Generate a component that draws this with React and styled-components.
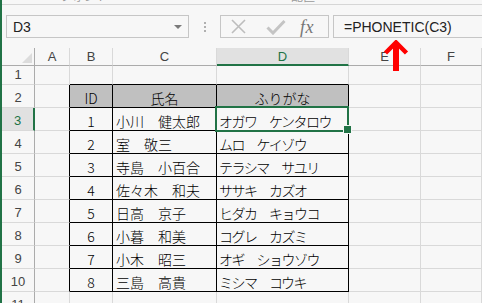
import React from 'react';
import styled, { createGlobalStyle } from 'styled-components';

const GREEN = '#217346';
const GRID = '#d9d9d9';
const BG = '#f7f7f7';

const GlobalStyle = createGlobalStyle`
  html, body { margin: 0; padding: 0; background: ${BG}; overflow: hidden; }
  * { box-sizing: border-box; }
`;

const Page = styled.div`
  position: relative;
  width: 482px;
  height: 303px;
  overflow: hidden;
  border-left: 2px solid ${GREEN};
  background: ${BG};
  font-family: "Liberation Sans", Arial, sans-serif;
`;

const TopStrip = styled.div`
  height: 5px;
  border-bottom: 1px solid #d6d6d6;
  overflow: hidden;
  display: flex;
  font: 12px/12px "Noto Sans CJK JP", sans-serif;
  color: #9a9a9a;
`;

const StripLabel = styled.span`
  margin-top: -10px;
  margin-left: ${p => p.$gap}px;
`;

const FormulaBar = styled.div`
  display: flex;
  align-items: center;
  height: 23px;
  margin: 10px 0 10px 4px;
`;

const NameBox = styled.div`
  width: 183px;
  height: 23px;
  border: 1px solid #c6c6c6;
  display: flex;
  align-items: center;
  justify-content: space-between;
  padding: 0 6px 0 6px;
  font-size: 14px;
  color: #222;
`;

const DropArrow = styled.span`
  width: 0;
  height: 0;
  border-left: 4px solid transparent;
  border-right: 4px solid transparent;
  border-top: 4px solid #7a7a7a;
`;

const Dots = styled.div`
  display: flex;
  flex-direction: column;
  gap: 2px;
  margin-left: 15px;
`;

const Dot = styled.span`
  width: 2px;
  height: 2px;
  background: #b0b0b0;
`;

const ButtonGroup = styled.div`
  width: 109px;
  height: 23px;
  margin-left: 14px;
  border: 1px solid #c6c6c6;
  display: flex;
  align-items: center;
  padding-left: 9px;
`;

const IconSlot = styled.span`
  display: flex;
  margin-right: ${p => p.$gap}px;
`;

const Fx = styled.i`
  font: italic 18px/18px "Liberation Serif", "Times New Roman", serif;
  color: #757575;
  letter-spacing: 0.5px;
`;

const FormulaInput = styled.div`
  flex: 1;
  height: 23px;
  margin-left: 4px;
  margin-right: -10px;
  border: 1px solid #c6c6c6;
  display: flex;
  align-items: center;
  padding-left: 10px;
  font-size: 14px;
  color: #222;
`;

const Sheet = styled.div`
  display: grid;
  grid-template-columns: 33px 35px 43px 104px 132px 72px 1fr;
  grid-template-rows: 18px 19px repeat(10, 23px);
`;

const CornerCell = styled.div`
  position: relative;
  border-right: 1px solid #ababab;
  border-bottom: 1px solid #ababab;
  &::after {
    content: '';
    position: absolute;
    right: 2px;
    bottom: 2px;
    width: 0;
    height: 0;
    border-left: 10px solid transparent;
    border-bottom: 10px solid #dcdcdc;
  }
`;

const ColHeader = styled.div`
  display: flex;
  align-items: center;
  justify-content: center;
  border-right: 1px solid ${GRID};
  border-bottom: ${p => (p.$active ? `2px solid ${GREEN}` : '1px solid #ababab')};
  background: ${p => (p.$active ? '#e1e1e1' : 'transparent')};
  color: ${p => (p.$active ? GREEN : '#444')};
  font-size: 13px;
  padding-top: ${p => (p.$active ? '1px' : '0')};
`;

const RowHeader = styled.div`
  display: flex;
  align-items: flex-end;
  justify-content: center;
  padding-bottom: 2px;
  border-right: ${p => (p.$active ? `2px solid ${GREEN}` : '1px solid #ababab')};
  border-bottom: 1px solid ${GRID};
  background: ${p => (p.$active ? '#e1e1e1' : 'transparent')};
  color: ${p => (p.$active ? GREEN : '#444')};
  font-size: 13px;
  line-height: 15px;
`;

const Cell = styled.div`
  display: flex;
  align-items: flex-end;
  justify-content: ${p => (p.$center ? 'center' : 'flex-start')};
  padding: 0 0 1px ${p => p.$indent}px;
  border-right: 1px solid ${p => (p.$rb ? '#000' : GRID)};
  border-bottom: 1px solid ${p => (p.$bb ? '#000' : GRID)};
  background: ${p => (p.$head ? '#c0c0c0' : 'transparent')};
  font: 300 14px/16px "Noto Sans CJK JP", sans-serif;
  letter-spacing: ${p => (p.$kana ? '-1.5px' : '0')};
  color: #000;
  white-space: nowrap;
  position: ${p => (p.$selected ? 'relative' : 'static')};
`;

const Selection = styled.div`
  position: absolute;
  left: -2px;
  top: -2px;
  right: -1px;
  bottom: -2px;
  border: 2px solid ${GREEN};
  z-index: 2;
  pointer-events: none;
  &::after {
    content: '';
    position: absolute;
    right: -5px;
    bottom: -4px;
    width: 7px;
    height: 7px;
    background: ${GREEN};
    border: 1px solid ${BG};
  }
`;

const Arrow = styled.svg`
  position: absolute;
  left: 380px;
  top: 40px;
  z-index: 3;
`;

const COLS = ['A', 'B', 'C', 'D', 'E', 'F'];

const DATA = [
  ['1', '小川　健太郎', 'オガワ　ケンタロウ'],
  ['2', '室　敬三', 'ムロ　ケイゾウ'],
  ['3', '寺島　小百合', 'テラシマ　サユリ'],
  ['4', '佐々木　和夫', 'ササキ　カズオ'],
  ['5', '日高　京子', 'ヒダカ　キョウコ'],
  ['6', '小暮　和美', 'コグレ　カズミ'],
  ['7', '小木　昭三', 'オギ　ショウゾウ'],
  ['8', '三島　高貴', 'ミシマ　コウキ'],
];

function buildRows() {
  const rows = [];
  for (let r = 1; r <= 11; r++) {
    const inTable = r >= 2 && r <= 10;
    const values =
      r === 2 ? ['ID', '氏名', 'ふりがな'] : r >= 3 && r <= 10 ? DATA[r - 3] : ['', '', ''];
    rows.push(
      <RowHeader key={`h${r}`} $active={r === 3}>
        {r}
      </RowHeader>
    );
    rows.push(<Cell key={`a${r}`} $rb={inTable} $bb={false} $indent={2} />);
    rows.push(
      <Cell key={`b${r}`} $rb={inTable} $bb={inTable || r === 1} $head={r === 2} $center $indent={0}>
        {values[0]}
      </Cell>
    );
    rows.push(
      <Cell
        key={`c${r}`}
        $rb={inTable}
        $bb={inTable || r === 1}
        $head={r === 2}
        $center={r === 2}
        $indent={r === 2 ? 0 : 3}
      >
        {values[1]}
      </Cell>
    );
    rows.push(
      <Cell
        key={`d${r}`}
        $rb={inTable}
        $bb={inTable || r === 1}
        $head={r === 2}
        $center={r === 2}
        $kana={r !== 2}
        $indent={r === 2 ? 0 : 2}
        $selected={r === 3}
      >
        {values[2]}
        {r === 3 && <Selection />}
      </Cell>
    );
    rows.push(<Cell key={`e${r}`} $indent={2} />);
    rows.push(<Cell key={`f${r}`} $indent={2} />);
  }
  return rows;
}

export default function App() {
  return (
    <Page>
      <GlobalStyle />
      <TopStrip>
        <StripLabel $gap={58}>フォント</StripLabel>
        <StripLabel $gap={183}>配置</StripLabel>
      </TopStrip>
      <FormulaBar>
        <NameBox>
          <span>D3</span>
          <DropArrow />
        </NameBox>
        <Dots>
          <Dot />
          <Dot />
          <Dot />
        </Dots>
        <ButtonGroup>
          <IconSlot $gap={19}>
            <svg width="17" height="15" viewBox="0 0 17 15">
              <path d="M2 1 L15 14 M15 1 L2 14" stroke="#bdbdbd" strokeWidth="1.6" fill="none" />
            </svg>
          </IconSlot>
          <IconSlot $gap={14}>
            <svg width="20" height="16" viewBox="0 0 20 16">
              <path d="M1.5 8.5 L7 14 L18.5 2" stroke="#c4c4c4" strokeWidth="3" fill="none" />
            </svg>
          </IconSlot>
          <Fx>fx</Fx>
        </ButtonGroup>
        <FormulaInput>=PHONETIC(C3)</FormulaInput>
      </FormulaBar>
      <Sheet>
        <CornerCell />
        {COLS.map(c => (
          <ColHeader key={c} $active={c === 'D'}>
            {c}
          </ColHeader>
        ))}
        {buildRows()}
      </Sheet>
      <Arrow width="28" height="32" viewBox="0 0 28 32">
        <path d="M3.5 13 L14 2.5 L24.5 13" stroke="#ff0000" strokeWidth="4.5" fill="none" />
        <rect x="11" y="4" width="6" height="27" fill="#ff0000" />
      </Arrow>
    </Page>
  );
}
